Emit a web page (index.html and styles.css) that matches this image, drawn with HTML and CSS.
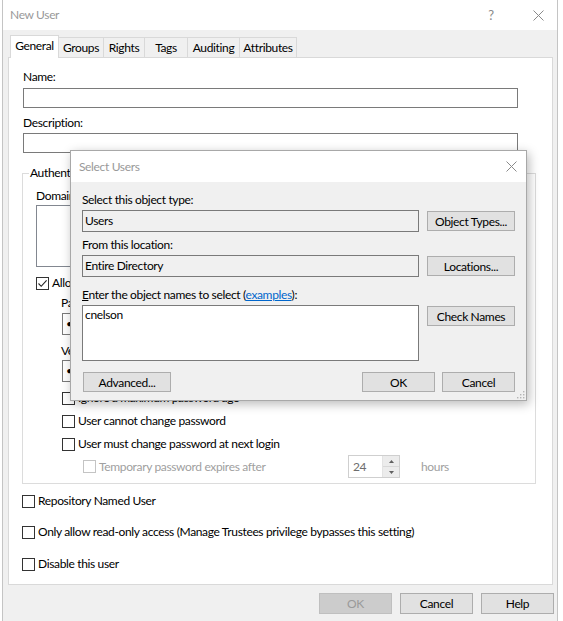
FILE: index.html
```html
<!DOCTYPE html>
<html lang="en">
<head>
<meta charset="utf-8">
<title>New User</title>
<link rel="stylesheet" href="styles.css">
</head>
<body>
<div class="desk">
  <div class="win">
    <div class="titlebar">
      <span class="title">New User</span>
      <span class="tb-help">?</span>
      <span class="tb-close"><svg width="11" height="11" viewBox="0 0 11 11"><path d="M0.5 0.5L10.5 10.5M10.5 0.5L0.5 10.5" stroke="#8a8a8a" stroke-width="1" fill="none"/></svg></span>
    </div>
    <div class="tabs">
      <div class="tab sel w1">General</div>
      <div class="tab w2">Groups</div>
      <div class="tab w3">Rights</div>
      <div class="tab w4">Tags</div>
      <div class="tab w5">Auditing</div>
      <div class="tab w6">Attributes</div>
    </div>
    <div class="panel">
      <div class="lbl l-name">Name:</div>
      <div class="tb t-name"></div>
      <div class="lbl l-desc">Description:</div>
      <div class="tb t-desc"></div>
      <fieldset class="grp">
        <legend>Authentication</legend>
        <div class="grp-in">
          <div class="lbl">Domain</div>
          <div class="listbox"></div>
          <div class="chkrow r-allow"><span class="cb"><svg width="11" height="11" viewBox="0 0 11 11"><path d="M1.5 5.5L4.2 8.3L9.6 2.3" stroke="#222" stroke-width="1.1" fill="none"/></svg></span><span>Allow password authentication</span></div>
          <div class="sub">
            <div class="lbl l-pw">Password:</div>
            <div class="pw">&#8226;&#8226;&#8226;&#8226;&#8226;&#8226;&#8226;&#8226;</div>
            <div class="lbl l-ver">Verify password:</div>
            <div class="pw pw2">&#8226;&#8226;&#8226;&#8226;&#8226;&#8226;&#8226;&#8226;</div>
            <div class="chkrow r-ignore"><span class="cb"></span><span>Ignore a maximum password age</span></div>
            <div class="chkrow r-cannot"><span class="cb"></span><span>User cannot change password</span></div>
            <div class="chkrow r-must"><span class="cb"></span><span>User must change password at next login</span></div>
            <div class="temprow">
              <div class="chkrow dis"><span class="cb"></span><span>Temporary password expires after</span></div>
              <div class="spin">
                <span class="spin-val">24</span>
                <span class="spin-btns">
                  <span class="sb"><svg width="5" height="3" viewBox="0 0 5 3"><path d="M0 3L2.5 0L5 3Z" fill="#606060"/></svg></span>
                  <span class="sb"><svg width="5" height="3" viewBox="0 0 5 3"><path d="M0 0L2.5 3L5 0Z" fill="#606060"/></svg></span>
                </span>
              </div>
              <span class="hours">hours</span>
            </div>
          </div>
        </div>
      </fieldset>
      <div class="chkrow r-repo"><span class="cb"></span><span>Repository Named User</span></div>
      <div class="chkrow r-only"><span class="cb"></span><span>Only allow read-only access (Manage Trustees privilege bypasses this setting)</span></div>
      <div class="chkrow r-dis"><span class="cb"></span><span>Disable this user</span></div>
    </div>
    <div class="footer">
      <button class="btn disabled">OK</button>
      <button class="btn">Cancel</button>
      <button class="btn">Help</button>
    </div>
  </div>

  <div class="dialog">
    <div class="dlg-title">
      <span class="title">Select Users</span>
      <span class="dlg-close"><svg width="11" height="11" viewBox="0 0 11 11"><path d="M0.5 0.5L10.5 10.5M10.5 0.5L0.5 10.5" stroke="#8a8a8a" stroke-width="1" fill="none"/></svg></span>
    </div>
    <div class="dlg-body">
      <div class="dl dl1">Select this object type:</div>
      <div class="ro">Users</div>
      <button class="btn dbtn">Object Types...</button>
      <div class="dl dl2">From this location:</div>
      <div class="ro">Entire Directory</div>
      <button class="btn dbtn">Locations...</button>
      <div class="dl dl3"><u>E</u>nter the object names to select (<a class="link">examples</a>):</div>
      <div class="names">cnelson</div>
      <button class="btn dbtn">Check Names</button>
      <div class="dlg-actions">
        <button class="btn adv">Advanced...</button>
        <span class="grow"></span>
        <button class="btn act">OK</button>
        <button class="btn act">Cancel</button>
      </div>
    </div>
    <span class="grip"><svg width="9" height="9" viewBox="0 0 9 9"><g fill="#b5b5b5"><rect x="7" y="1" width="1.4" height="1.4"/><rect x="4" y="4" width="1.4" height="1.4"/><rect x="7" y="4" width="1.4" height="1.4"/><rect x="1" y="7" width="1.4" height="1.4"/><rect x="4" y="7" width="1.4" height="1.4"/><rect x="7" y="7" width="1.4" height="1.4"/></g></svg></span>
  </div>
</div>
</body>
</html>
```

FILE: styles.css
```css
* { box-sizing: border-box; }
html, body { margin: 0; padding: 0; }
body {
  width: 563px;
  height: 621px;
  overflow: hidden;
  background: #ffffff;
  font-family: Lato, "Liberation Sans", sans-serif;
  font-size: 12px;
  letter-spacing: -0.35px;
  color: #000;
}
.desk {
  position: relative;
  width: 563px;
  height: 621px;
  overflow: hidden;
}
.win {
  margin-left: 2px;
  width: 556px;
  height: 621px;
  background: #f0f0f0;
  border-left: 1px solid #c4c4c4;
  border-right: 1px solid #c4c4c4;
  display: flex;
  flex-direction: column;
}
.titlebar {
  height: 30px;
  background: #fff;
  display: flex;
  align-items: center;
  flex: none;
}
.title {
  padding-left: 7px;
  color: #999;
  line-height: 16px;
}
.tb-help {
  margin-left: auto;
  width: 56px;
  text-align: center;
  color: #8a8a8a;
  font-size: 13px;
}
.tb-close {
  width: 38px;
  display: flex;
  justify-content: center;
  align-items: center;
  height: 30px;
}
.tabs {
  height: 27px;
  flex: none;
  display: flex;
  align-items: flex-end;
  padding-left: 7px;
}
.tab {
  height: 20px;
  border: 1px solid #d9d9d9;
  border-bottom: none;
  background: #f0f0f0;
  display: flex;
  align-items: center;
  justify-content: center;
  margin-right: -1px;
  line-height: 16px;
}
.tab.sel {
  height: 23px;
  background: #fff;
  margin-bottom: -1px;
  padding-bottom: 2px;
  position: relative;
  z-index: 1;
}
.w1 { width: 49px; }
.w2 { width: 46px; }
.w3 { width: 42px; }
.w4 { width: 44px; }
.w5 { width: 53px; }
.w6 { width: 58px; }

.panel {
  flex: none;
  height: 528px;
  margin: 0 4px 0 5px;
  background: #fff;
  border: 1px solid #d9d9d9;
  padding-left: 14px;
  display: flex;
  flex-direction: column;
}
.lbl { line-height: 16px; }
.l-name { margin-top: 11px; }
.l-desc { margin-top: 7px; }
.tb {
  width: 495px;
  height: 20px;
  border: 1px solid #7a7a7a;
  background: #fff;
}
.t-name { margin-top: 3px; }
.t-desc { margin-top: 2px; }

.grp {
  margin: 12px 0 0 -1px;
  width: 514px;
  border: 1px solid #dcdcdc;
  padding: 7px 0 5px 6px;
  min-width: 0;
}
.grp legend {
  padding: 0 1px;
  line-height: 16px;
}
.grp-in { margin-left: 7px; display: flex; flex-direction: column; }
.listbox {
  margin-top: 1px;
  width: 380px;
  height: 62px;
  border: 1px solid #828790;
  background: #fff;
}
.chkrow {
  display: flex;
  align-items: center;
  height: 16px;
  line-height: 16px;
}
.cb {
  width: 13px;
  height: 13px;
  border: 1px solid #333;
  background: #fff;
  margin-right: 3px;
  flex: none;
  display: flex;
  align-items: center;
  justify-content: center;
}
.chkrow.dis { color: #a0a0a0; }
.chkrow.dis .cb { border-color: #c4c4c4; }
.r-allow { margin-top: 8px; }
.sub { margin-left: 25px; display: flex; flex-direction: column; }
.l-pw { margin-top: 4px; }
.l-ver { margin-top: 8px; }
.pw {
  margin-top: 2px;
  margin-left: 1px;
  width: 240px;
  height: 22px;
  border: 1px solid #7a7a7a;
  background: #fff;
  padding-left: 3px;
  line-height: 20px;
  letter-spacing: 1px;
}
.pw2 { margin-top: 1px; }
.r-ignore { margin-top: 8px; margin-left: 1px; }
.r-cannot { margin-top: 7px; margin-left: 1px; }
.r-must { margin-top: 7px; margin-left: 1px; }
.temprow {
  margin-top: 3px;
  margin-left: 22px;
  height: 23px;
  display: flex;
  align-items: center;
}
.temprow .chkrow { width: 265px; }
.spin {
  width: 52px;
  height: 23px;
  border: 1px solid #cfcfcf;
  background: #fff;
  display: flex;
}
.spin-val {
  flex: 1;
  padding-left: 4px;
  line-height: 21px;
  color: #6d6d6d;
}
.spin-btns {
  width: 17px;
  display: flex;
  flex-direction: column;
  border-left: 1px solid #e3e3e3;
}
.sb {
  flex: 1;
  background: #ececec;
  display: flex;
  align-items: center;
  justify-content: center;
}
.sb + .sb { border-top: 1px solid #d8d8d8; }
.hours { margin-left: 21px; color: #a0a0a0; }
.r-repo { margin-top: 9px; margin-left: -1px; }
.r-only { margin-top: 15px; margin-left: -1px; }
.r-dis { margin-top: 16px; margin-left: -1px; }

.footer {
  flex: none;
  display: flex;
  justify-content: flex-end;
  gap: 8px;
  padding: 8px 3px 0 0;
}
.btn {
  font-family: inherit;
  font-size: 12px;
  letter-spacing: -0.35px;
  color: #000;
  background: #e1e1e1;
  border: 1px solid #adadad;
  height: 21px;
  width: 73px;
  padding: 0;
  margin: 0;
  line-height: 17px;
}
.btn.disabled {
  background: #cccccc;
  border-color: #bfbfbf;
  color: #9a9a9a;
}

.dialog {
  position: absolute;
  left: 70px;
  top: 150px;
  width: 457px;
  height: 251px;
  z-index: 5;
  background: #f0f0f0;
  border: 1px solid #a8a8a8;
  box-shadow: 2px 3px 10px rgba(0, 0, 0, 0.28);
}
.dlg-title {
  height: 31px;
  background: #fff;
  display: flex;
  align-items: center;
}
.dlg-title .title { padding-left: 8px; }
.dlg-close {
  margin-left: auto;
  margin-right: 9px;
  display: flex;
  align-items: center;
}
.dlg-body {
  padding: 10px 10px 0 11px;
  display: grid;
  grid-template-columns: 337px 88px;
  column-gap: 8px;
  align-items: start;
}
.dl { grid-column: 1 / 3; line-height: 16px; }
.dl2 { margin-top: 5px; }
.dl3 { margin-top: 10px; }
.link { color: #0066cc; text-decoration: underline; }
.ro {
  margin-top: 2px;
  height: 22px;
  border: 1px solid #7a7a7a;
  background: #f0f0f0;
  padding-left: 2px;
  line-height: 20px;
}
.dbtn {
  width: 88px;
  height: 20px;
  margin-top: 3px;
}
.names {
  margin-top: 2px;
  height: 56px;
  border: 1px solid #7a7a7a;
  background: #fff;
  padding: 1px 0 0 2px;
  line-height: 16px;
}
.dlg-actions {
  grid-column: 1 / 3;
  margin-top: 11px;
  display: flex;
  gap: 7px;
}
.grow { flex: 1; }
.adv { width: 88px; height: 20px; margin-left: 1px; }
.act { width: 73px; height: 20px; }
.grip {
  position: absolute;
  right: 1px;
  bottom: 1px;
  width: 9px;
  height: 9px;
  display: flex;
}
```
